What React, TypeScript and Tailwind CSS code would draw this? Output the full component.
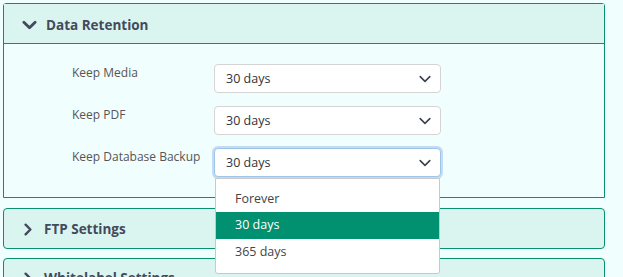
import React from "react";

const font = { fontFamily: '"Segoe UI", "Open Sans", "Noto Sans", sans-serif' };

const ChevronDown = ({ className, w = 2.2 }: { className?: string; w?: number }) => (
  <svg viewBox="0 0 16 10" className={className} fill="none" stroke="currentColor" strokeWidth={w} strokeLinecap="round" strokeLinejoin="round">
    <polyline points="2,2 8,8 14,2" />
  </svg>
);

const ChevronRight = ({ className }: { className?: string }) => (
  <svg viewBox="0 0 10 16" className={className} fill="none" stroke="currentColor" strokeWidth={3} strokeLinecap="round" strokeLinejoin="round">
    <polyline points="2,2 8,8 2,14" />
  </svg>
);

const Select = ({ focused, open }: { focused?: boolean; open?: boolean }) => (
  <div className="relative w-[227px]">
    <div
      className={
        "flex h-[29px] items-center justify-between rounded-[4px] border bg-white pl-[11px] pr-[7px] pt-[1px] text-[12.5px] text-[#333] " +
        (focused ? "border-[#9ec5e8] shadow-[0_0_0_2px_#c3dcf3]" : "border-[#d4d4d4]")
      }
    >
      <span>30 days</span>
      <ChevronDown className="mr-[1px] h-[8px] w-[14px] text-[#3b4252]" w={2} />
    </div>
    {open && (
      <div className="absolute left-[1px] top-[30px] z-10 w-[225px] rounded-b-[3px] border border-[#c8c8c8] bg-white py-[7px] text-[12.5px] text-[#444]">
        <div className="flex h-[26px] items-center pl-[19px]">Forever</div>
        <div className="flex h-[27px] items-center bg-[#019170] pl-[19px] text-white">30 days</div>
        <div className="flex h-[27px] items-center pl-[19px]">365 days</div>
      </div>
    )}
  </div>
);

const Row = ({ label, focused, open }: { label: string; focused?: boolean; open?: boolean }) => (
  <div className="flex items-start">
    <div className="w-[142px] text-[12px] text-[#555]">{label}</div>
    <Select focused={focused} open={open} />
  </div>
);

export default function App() {
  return (
    <div className="h-[277px] w-[623px] overflow-hidden bg-[#f1fefe] pl-[3px] pt-[3px]" style={font}>
      <div className="w-[602px]">
        <div className="rounded-t-[3px] border border-[#07916f]">
          <div className="flex h-[40px] items-center border-b border-[#07916f] bg-[#daf5f0] pl-[18px] pt-[3px] text-[13.5px] font-bold text-[#434a5c]">
            <ChevronDown className="mr-[9px] h-[10px] w-[15px]" w={3} />
            Data Retention
          </div>
          <div className="flex flex-col gap-[13px] pb-[20px] pl-[68px] pt-[20px]">
            <Row label="Keep Media" />
            <Row label="Keep PDF" />
            <Row label="Keep Database Backup" focused open />
          </div>
        </div>

        <div className="mt-[10px] flex h-[41px] items-center rounded-[4px] border border-[#07916f] bg-[#daf5f0] pl-[20px] pt-[1px] text-[13.5px] font-bold text-[#434a5c]">
          <ChevronRight className="mr-[12px] h-[13px] w-[8px]" />
          FTP Settings
        </div>

        <div className="mt-[9px] flex h-[41px] items-center rounded-[4px] border border-[#07916f] bg-[#daf5f0] pl-[20px] text-[13.5px] font-bold text-[#434a5c]">
          <ChevronRight className="mr-[12px] h-[13px] w-[8px]" />
          Whitelabel Settings
        </div>
      </div>
    </div>
  );
}
